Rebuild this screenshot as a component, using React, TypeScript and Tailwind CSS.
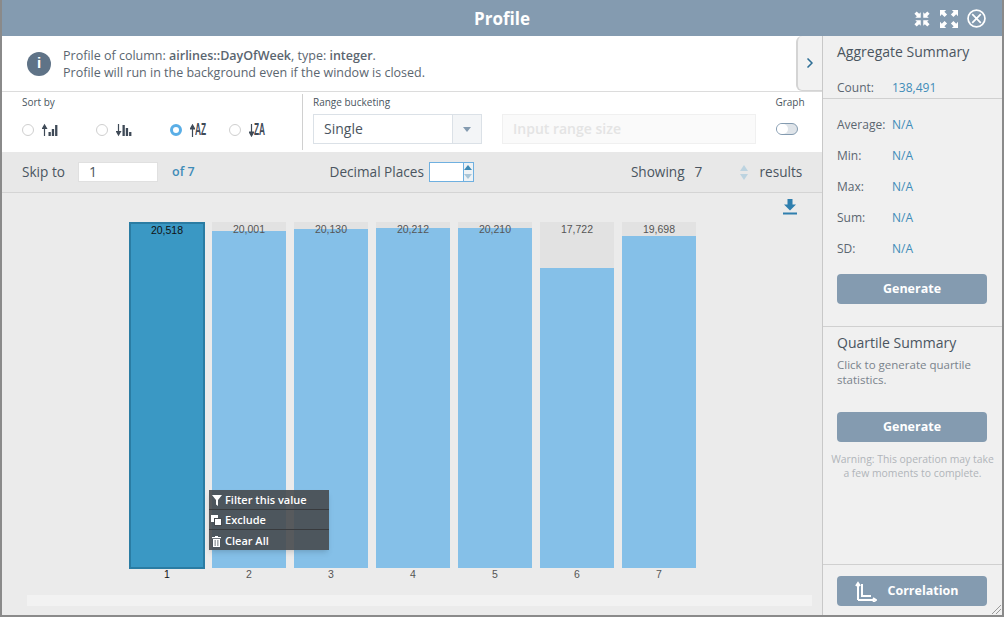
import { ChevronRight } from "lucide-react";

const bars = [
  { id: 1, value: "20,518", top: 0, active: true },
  { id: 2, value: "20,001", top: 9 },
  { id: 3, value: "20,130", top: 7 },
  { id: 4, value: "20,212", top: 6 },
  { id: 5, value: "20,210", top: 6 },
  { id: 6, value: "17,722", top: 46 },
  { id: 7, value: "19,698", top: 14 },
];

const stats = ["Average:", "Min:", "Max:", "Sum:", "SD:"];

function Radio({ checked }: { checked?: boolean }) {
  return checked ? (
    <span className="w-3 h-3 rounded-full border-[3.5px] border-[#5aaee6] bg-white shrink-0" />
  ) : (
    <span className="w-3 h-3 rounded-full border border-[#cfcfcf] bg-white shrink-0" />
  );
}

function SortBars({ down }: { down?: boolean }) {
  const heights = down ? [11, 8, 4] : [4, 7, 11];
  return (
    <svg width="16" height="14" viewBox="0 0 16 14" className="text-[#3f4a57]">
      <path
        d={down ? "M2.5 1v9M0.5 8.5l2 3.5 2-3.5z" : "M2.5 13V4M0.5 5.5l2-3.5 2 3.5z"}
        stroke="currentColor"
        strokeWidth="1.2"
        fill="currentColor"
      />
      {heights.map((h, i) => (
        <rect key={i} x={6.5 + i * 3.3} y={13 - h} width="2.3" height={h} fill="currentColor" />
      ))}
    </svg>
  );
}

function SortAlpha({ label, down }: { label: string; down?: boolean }) {
  return (
    <span className="flex items-center text-[#3f4a57]">
      <svg width="5" height="13" viewBox="0 0 5 13">
        <path
          d={down ? "M2.5 0v9M0.3 8l2.2 4 2.2-4z" : "M2.5 13V4M0.3 5l2.2-4 2.2 4z"}
          stroke="currentColor"
          strokeWidth="1.2"
          fill="currentColor"
        />
      </svg>
      <span className="inline-block w-[12px] text-[16px] leading-none font-bold scale-x-[0.52] origin-left font-['Liberation_Sans',sans-serif] whitespace-nowrap">
        {label}
      </span>
    </span>
  );
}

function Compress({ out, size }: { out?: boolean; size: number }) {
  // four small corner arrows, pointing in or out
  const arrow = out ? "M0 0h6.5L4.6 1.9l2.9 2.9-2.7 2.7-2.9-2.9L0 6.5z" : "M8 8H1.5l1.9-1.9L.5 3.2 3.2.5l2.9 2.9L8 1.5z";
  return (
    <svg width={size} height={size} viewBox="0 0 19 19" fill="white">
      <path d={arrow} />
      <path d={arrow} transform="matrix(-1 0 0 1 19 0)" />
      <path d={arrow} transform="matrix(1 0 0 -1 0 19)" />
      <path d={arrow} transform="matrix(-1 0 0 -1 19 19)" />
    </svg>
  );
}

function SidebarButton({ children }: { children: React.ReactNode }) {
  return (
    <button className="w-[150px] h-[30px] rounded bg-[#849bb0] text-white text-[12.5px] font-bold flex items-center justify-center">
      {children}
    </button>
  );
}

export default function App() {
  return (
    <div className="w-[1004px] h-[617px] bg-[#8a8a8a] px-[2px] pb-[2px] flex flex-col font-['Open_Sans',sans-serif] overflow-hidden">
      {/* Title bar */}
      <header className="h-[36px] shrink-0 bg-[#849bb0] flex items-center justify-center relative pt-[2px]">
        <h1 className="text-white text-[17px] font-bold">Profile</h1>
        <div className="absolute right-[16px] top-[9px] flex items-center">
          <Compress size={16} />
          <span className="ml-[10px]">
            <Compress out size={18} />
          </span>
          <svg width="19" height="19" viewBox="0 0 20 20" fill="none" stroke="white" strokeWidth="1.8" className="ml-[9px]">
            <circle cx="10" cy="10" r="8.9" />
            <path d="M5.5 5.5l9 9M14.5 5.5l-9 9" />
          </svg>
        </div>
      </header>

      <div className="flex-1 flex min-h-0">
        <main className="w-[820px] shrink-0 flex flex-col relative">
          {/* Info */}
          <div className="h-[56px] shrink-0 bg-white border-b border-[#dcdcdc] flex items-center pl-[25px] gap-[12px]">
            <span className="w-6 h-6 rounded-full bg-[#5f7387] text-white flex items-center justify-center font-bold text-[15px] font-['Liberation_Sans',sans-serif]">
              i
            </span>
            <p className="text-[12.5px] leading-[17px] text-[#5b6670]">
              Profile of column: <b className="font-semibold">airlines::DayOfWeek</b>, type:{" "}
              <b className="font-semibold">integer</b>.
              <br />
              Profile will run in the background even if the window is closed.
            </p>
          </div>

          {/* Sort and range controls */}
          <div className="h-[60px] shrink-0 bg-white flex">
            <div className="w-[301px] h-[56px] mt-[2px] border-r border-[#d0d0d0] pl-[20px] pt-[1px]">
              <div className="text-[10px] leading-[14px] text-[#4a5560]">Sort by</div>
              <div className="flex items-center mt-[14px] h-[14px]">
                <div className="flex items-center gap-[8px] w-[74px]">
                  <Radio />
                  <SortBars />
                </div>
                <div className="flex items-center gap-[8px] w-[74px]">
                  <Radio />
                  <SortBars down />
                </div>
                <div className="flex items-center gap-[8px] w-[59px]">
                  <Radio checked />
                  <SortAlpha label="AZ" />
                </div>
                <div className="flex items-center gap-[8px]">
                  <Radio />
                  <SortAlpha label="ZA" down />
                </div>
              </div>
            </div>
            <div className="pl-[10px] pt-[3px] w-[200px]">
              <div className="text-[10px] leading-[14px] text-[#4a5560]">Range bucketing</div>
              <div className="mt-[5px] w-[169px] h-[30px] border border-[#dbe1e7] flex items-center">
                <span className="flex-1 pl-[10px] pb-[2px] text-[14px] text-[#4a5560]">Single</span>
                <span className="w-[29px] h-full bg-[#f3f5f7] border-l border-[#dbe1e7] flex items-center justify-center">
                  <span className="border-x-[4px] border-x-transparent border-t-[5px] border-t-[#849bb0]" />
                </span>
              </div>
            </div>
            <div className="mt-[22px] ml-[-1px] w-[254px] h-[30px] bg-[#fafafa] border border-[#f0f0f0] flex items-center pl-[10px] pb-[2px] text-[14px] font-semibold text-[#e4e4e4]">
              Input range size
            </div>
            <div className="ml-[19px] pt-[3px] flex flex-col items-center w-[30px]">
              <div className="text-[10px] leading-[14px] text-[#4a5560]">Graph</div>
              <span className="mt-[14px] -ml-[7px] w-[22px] h-[12px] rounded-full border-[1.5px] border-[#849bb0] bg-[#dfe4e9] flex">
                <span className="w-[11px] h-full rounded-full bg-white" />
              </span>
            </div>
          </div>

          {/* Skip / decimal / showing */}
          <div className="h-[41px] shrink-0 bg-[#e8e8e8] border-b border-[#d4d4d4] flex items-center text-[13.6px] text-[#4a5560] pl-[20px]">
            <span className="w-[56px]">Skip to</span>
            <span className="w-[80px] h-[20px] bg-white border border-[#e0e0e0] pl-[10px] text-[14px] leading-[18px]">1</span>
            <span className="ml-[14px] text-[#3f8cb8] font-semibold text-[12.5px]">of 7</span>
            <span className="ml-[135px]">Decimal Places</span>
            <span className="ml-[5px] w-[45px] h-[20px] bg-white border border-[#6fb0e0] flex justify-end">
              <span className="w-[10px] h-full border-l border-[#6fb0e0] flex flex-col items-center justify-around bg-[#eef2f5]">
                <span className="border-x-[4px] border-x-transparent border-b-[5px] border-b-[#3d8ab5]" />
                <span className="border-x-[4px] border-x-transparent border-t-[5px] border-t-[#a9c6d8]" />
              </span>
            </span>
            <span className="ml-[157px]">Showing</span>
            <span className="ml-[10px] w-[45px]">7</span>
            <span className="flex flex-col gap-[3px] mr-[12px]">
              <span className="border-x-[4.5px] border-x-transparent border-b-[6px] border-b-[#bcd3e0]" />
              <span className="border-x-[4.5px] border-x-transparent border-t-[6px] border-t-[#bcd3e0]" />
            </span>
            <span>results</span>
          </div>

          {/* Chart */}
          <div className="flex-1 bg-[#ebebeb] relative pl-[127px] pt-[29px]">
            <svg width="14" height="16" viewBox="0 0 14 16" fill="#2f7fae" className="absolute left-[781px] top-[6px]">
              <path d="M4.5 0h5v5.5H13L7 11.5 1 5.5h3.5z" />
              <rect x="0" y="13.5" width="14" height="2" />
            </svg>
            <div className="flex gap-[8px]">
              {bars.map((b) =>
                b.active ? (
                  <div key={b.id} className="w-[76px] flex flex-col items-center -mr-[1px]">
                    <div className="w-full h-[347px] bg-[#3a98c4] border-2 border-[#2a7ca3] text-[10.5px] text-center leading-[12px] text-[#111] font-['Liberation_Sans',sans-serif]">
                      {b.value}
                    </div>
                    <div className="-mt-[1px] text-[10.5px] leading-[12px] text-[#111] font-['Liberation_Sans',sans-serif]">{b.id}</div>
                  </div>
                ) : (
                  <div key={b.id} className="w-[74px] flex flex-col items-center">
                    <div className="w-full h-[346px] bg-[#e2e2e2] flex flex-col relative">
                      <div className="shrink-0" style={{ height: b.top }} />
                      <div className="flex-1 bg-[#85c0e8]" />
                      <span className="absolute inset-x-0 top-[1px] text-center text-[10.5px] leading-[12px] text-[#555] font-['Liberation_Sans',sans-serif]">
                        {b.value}
                      </span>
                    </div>
                    <div className="text-[10.5px] leading-[12px] text-[#555] font-['Liberation_Sans',sans-serif]">{b.id}</div>
                  </div>
                )
              )}
            </div>
            <div className="absolute left-[25px] top-[402px] w-[785px] h-[11px] bg-[#f2f2f2]" />

            {/* Context menu */}
            <div className="absolute left-[207px] top-[297px] w-[120px] bg-[#474a4e]/90 text-white text-[11px] font-semibold shadow-md">
              <div className="h-[20px] pt-[2px] flex items-center pl-[3px] gap-[3px] border-b border-[#383a3d]">
                <svg width="10" height="11" viewBox="0 0 10 11" fill="white">
                  <path d="M0 0h10L6 5v6L4 9.5V5z" />
                </svg>
                Filter this value
              </div>
              <div className="h-[20px] pt-[2px] flex items-center pl-[2px] gap-[3px] border-b border-[#383a3d]">
                <svg width="11" height="11" viewBox="0 0 11 11" fill="white">
                  <rect x="0" y="0" width="7" height="7" />
                  <rect x="3.5" y="3.5" width="7" height="7" stroke="#474a4e" />
                </svg>
                Exclude
              </div>
              <div className="h-[20px] pt-[2px] flex items-center pl-[3px] gap-[4px]">
                <svg width="9" height="11" viewBox="0 0 9 11" fill="white">
                  <rect x="0" y="1" width="9" height="1.2" />
                  <rect x="3" y="0" width="3" height="1" />
                  <path d="M1 3h7v8H1zM2.7 4v6h.8V4zM5.5 4v6h.8V4z" fillRule="evenodd" />
                </svg>
                Clear All
              </div>
            </div>
          </div>

          {/* Panel toggle */}
          <div className="absolute left-[794px] top-0 w-[26px] h-[55px] bg-[#f2f2f2] border-l-2 border-b border-[#d4d4d4] rounded-bl-md rounded-tl-md flex items-center justify-center">
            <ChevronRight size={16} strokeWidth={2.5} className="text-[#2f6f96]" />
          </div>
        </main>

        {/* Sidebar */}
        <aside className="flex-1 bg-[#f0f0f0] border-l border-[#c8c8c8] flex flex-col text-[#5b6670] relative">
          <div className="h-[63px] shrink-0 border-b border-[#d0d0d0] px-[14px]">
            <h2 className="pt-[6px] text-[14px] leading-[19px] font-medium text-[#4a5560]">Aggregate Summary</h2>
            <div className="mt-[19px] flex text-[12px] leading-[16px]">
              <span className="w-[55px]">Count:</span>
              <span className="text-[#3f8cb8] font-medium">138,491</span>
            </div>
          </div>
          <div className="h-[228px] shrink-0 border-b border-[#d0d0d0] px-[14px] pt-[18px] flex flex-col">
            {stats.map((s) => (
              <div key={s} className="h-[31px] flex text-[12px] leading-[16px]">
                <span className="w-[55px]">{s}</span>
                <span className="text-[#3f8cb8] font-medium">N/A</span>
              </div>
            ))}
            <div className="mt-[2px]">
              <SidebarButton>Generate</SidebarButton>
            </div>
          </div>
          <div className="flex-1 border-b border-[#d0d0d0] px-[14px] pt-[6px]">
            <h2 className="text-[14px] leading-[19px] font-medium text-[#4a5560]">Quartile Summary</h2>
            <p className="mt-[5px] text-[11.5px] leading-[15px] text-[#7a838c]">Click to generate quartile statistics.</p>
            <div className="mt-[25px]">
              <SidebarButton>Generate</SidebarButton>
            </div>
            <p className="mt-[10px] -mx-[7px] text-center text-[10.4px] leading-[14px] text-[#b0b5ba]">
              Warning: This operation may take a few moments to complete.
            </p>
          </div>
          <div className="h-[50px] shrink-0 px-[14px] pt-[11px]">
            <SidebarButton>
              <svg width="22" height="22" viewBox="0 0 22 22" fill="none" stroke="white" strokeWidth="2" className="mr-[10px] -ml-[10px]">
                <path d="M3 20V4M1 6l2-3 2 3M3 20h16M18 18l3 2-3 2" />
                <path d="M7 4v12h9" />
              </svg>
              Correlation
            </SidebarButton>
          </div>

          {/* Resize grip */}
          <svg width="9" height="9" viewBox="0 0 9 9" stroke="#9a9a9a" className="absolute right-[1px] bottom-[1px]">
            <path d="M0 9L9 0M4 9l5-5" />
          </svg>
        </aside>
      </div>
    </div>
  );
}
